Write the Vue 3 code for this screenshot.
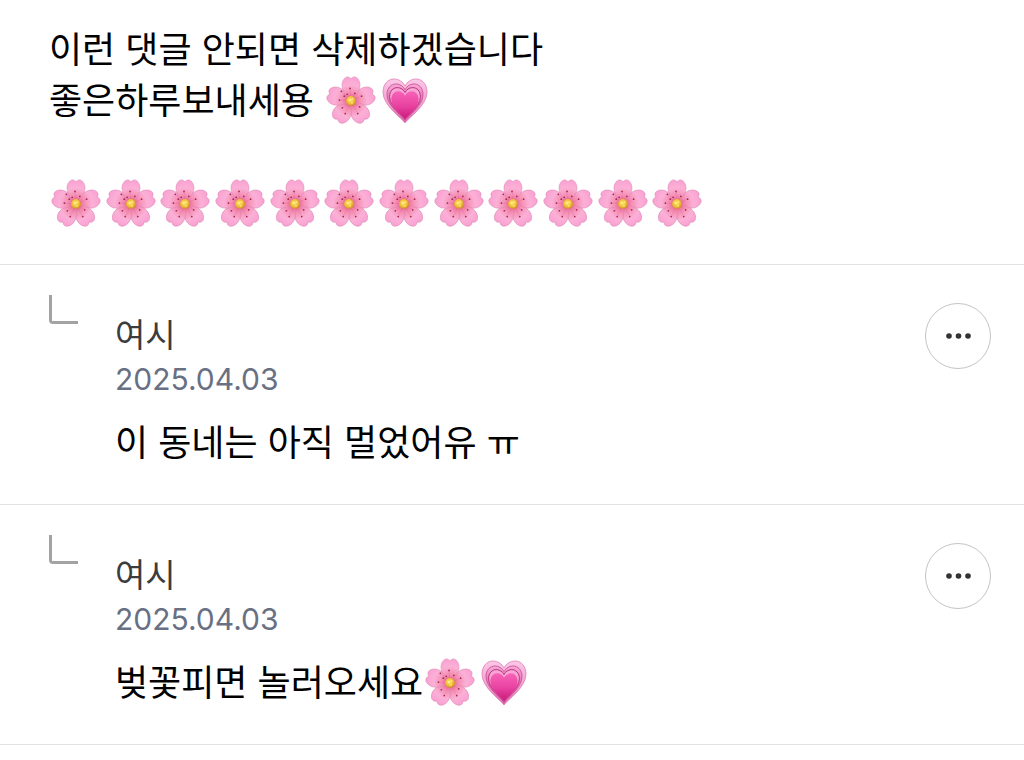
<template>
  <main class="comments">
    <!-- emoji -->
    <svg class="sprite" aria-hidden="true">
      <defs>
        <radialGradient id="petal-fill" gradientUnits="userSpaceOnUse" cx="0" cy="0" r="26">
          <stop offset="0" stop-color="#e2507c" />
          <stop offset="0.35" stop-color="#f58fb4" />
          <stop offset="0.65" stop-color="#fbb0d6" />
          <stop offset="1" stop-color="#fa9fd3" />
        </radialGradient>
        <radialGradient id="core-fill" cx="0.45" cy="0.4" r="0.6">
          <stop offset="0" stop-color="#ffe873" />
          <stop offset="0.6" stop-color="#f0bd38" />
          <stop offset="1" stop-color="#c98a2c" />
        </radialGradient>
        <linearGradient id="heart-fill" x1="0" y1="0" x2="0" y2="1">
          <stop offset="0" stop-color="#f862b8" />
          <stop offset="0.55" stop-color="#e8419f" />
          <stop offset="1" stop-color="#c91a7b" />
        </linearGradient>
        <linearGradient id="heart-mid" x1="0" y1="0" x2="0" y2="1">
          <stop offset="0" stop-color="#f8a8d6" />
          <stop offset="1" stop-color="#d83391" />
        </linearGradient>
        <linearGradient id="heart-outer" x1="0" y1="0" x2="0" y2="1">
          <stop offset="0" stop-color="#fbc8e6" />
          <stop offset="0.6" stop-color="#f29dcd" />
          <stop offset="1" stop-color="#df5ba6" />
        </linearGradient>
        <path id="petal" d="M0 0C-4-4-9.300-10-9.300-16.500C-9.300-21-6.500-25-3.500-25Q-1.500-25 0-23Q1.500-25 3.500-25C6.500-25 9.300-21 9.300-16.500C9.300-10 4-4 0 0Z" />
        <path id="heart-shape" d="M0 22C-3 17-22 5-22-9C-22-17-17-22-11-22C-6-22-2-19 0-15C2-19 6-22 11-22C17-22 22-17 22-9C22 5 3 17 0 22Z" />
      </defs>
      <symbol id="blossom" viewBox="-28 -28 56 56">
        <use v-for="n in 5" :key="n" href="#petal" fill="url(#petal-fill)" stroke="#dd84b0"
             stroke-width="0.6" :transform="`rotate(${n * 72})`" />
        <g stroke="#d95588" stroke-width="0.6">
          <line v-for="(s, i) in stamens" :key="i" x1="0" y1="0" :x2="s[0]" :y2="s[1]" opacity="0.35" />
        </g>
        <circle v-for="(s, i) in stamens" :key="i" :cx="s[0]" :cy="s[1]" r="0.9" fill="#a32650" />
        <circle r="5.200" fill="url(#core-fill)" />
        <circle cx="-1.500" cy="-1" r="1" fill="#fff0a0" />
        <circle cx="1.500" cy="-2" r="0.8" fill="#fff0a0" />
        <circle cx="1" cy="2" r="0.9" fill="#ffe36d" />
      </symbol>
      <symbol id="heart" viewBox="-27 -27 54 54">
        <use href="#heart-shape" fill="url(#heart-outer)" stroke="#e07fb8" stroke-width="0.8" />
        <use href="#heart-shape" fill="url(#heart-mid)" stroke="#c24d92" stroke-width="1" transform="translate(0 1) scale(0.82)" />
        <use href="#heart-shape" fill="#f7a6d4" stroke="#b5307c" stroke-width="1.4" transform="translate(0 2) scale(0.7)" />
        <use href="#heart-shape" fill="url(#heart-fill)" transform="translate(0 4) scale(0.62)" />
      </symbol>
    </svg>

    <article class="comment">
      <p class="text">이런 댓글 안되면 삭제하겠습니다</p>
      <p class="text">
        좋은하루보내세용&nbsp;<svg class="emoji" role="img" aria-label="벚꽃"><use href="#blossom" /></svg><svg class="emoji" role="img" aria-label="하트"><use href="#heart" /></svg>
      </p>
      <div class="blossoms">
        <svg v-for="n in 12" :key="n" class="emoji" role="img" aria-label="벚꽃"><use href="#blossom" /></svg>
      </div>
    </article>

    <article v-for="reply in replies" :key="reply.id" class="reply">
      <span class="branch"></span>
      <div class="body">
        <h2 class="name">{{ reply.name }}</h2>
        <time class="date">{{ reply.date }}</time>
        <p class="text">
          {{ reply.text }}<svg v-for="e in reply.emoji" :key="e" class="emoji" role="img" :aria-label="e"><use :href="'#' + e" /></svg>
        </p>
      </div>
      <button type="button" class="more" aria-label="더보기">
        <svg viewBox="0 0 25 6" width="25" height="6">
          <circle cx="3" cy="3" r="2.800" />
          <circle cx="12.500" cy="3" r="2.800" />
          <circle cx="22" cy="3" r="2.800" />
        </svg>
      </button>
    </article>
  </main>
</template>

<script setup>
const replies = [
  { id: 1, name: '여시', date: '2025.04.03', text: '이 동네는 아직 멀었어유 ㅠ', emoji: [] },
  { id: 2, name: '여시', date: '2025.04.03', text: '벚꽃피면 놀러오세요', emoji: ['blossom', 'heart'] }
]

// stamen tips, measured from the flower's centre
const stamens = [
  [-1, -13], [-10, -10], [-12, -1], [-9, 7], [-6, 13],
  [7, 13], [9, 6], [11, -5], [4, -8], [-4, -7], [-7, -5]
]
</script>

<style>
body {
  margin: 0;
  background: #fff;
}
</style>

<style scoped>
.comments {
  font-family: Inter, "Noto Sans CJK KR", sans-serif;
  color: #000;
}

.sprite {
  position: absolute;
  width: 0;
  height: 0;
}

.comment {
  padding: 25px 49px 36px;
  border-bottom: 1px solid #e2e2e2;
}

.text {
  margin: 0;
  font-size: 36px;
  line-height: 51px;
}

.emoji {
  display: inline-block;
  width: 54px;
  height: 54px;
  margin: -9px 0 -3px;
  vertical-align: middle;
}

.blossoms {
  display: grid;
  grid-template-columns: repeat(12, 1fr);
  max-width: 656px;
  padding-top: 59px;
}

.reply {
  display: flex;
  align-items: flex-start;
  padding: 30px 33px 35px 49px;
  border-bottom: 1px solid #e2e2e2;
}

.branch {
  box-sizing: border-box;
  width: 29px;
  height: 29px;
  border-left: 3px solid #a3a3a3;
  border-bottom: 3px solid #a3a3a3;
  border-bottom-left-radius: 4px;
}

.body {
  flex: 1;
  padding: 20px 0 0 37px;
}

.name {
  margin: 0;
  font-size: 33px;
  font-weight: 400;
  line-height: 40px;
  color: #3c3c3c;
}

.date {
  display: block;
  margin: 4px 0 19px;
  font-size: 30px;
  line-height: 40px;
  color: #697083;
}

.more {
  display: flex;
  align-items: center;
  justify-content: center;
  width: 66px;
  height: 66px;
  margin-top: 8px;
  padding: 0;
  border: 1px solid #c4c4c4;
  border-radius: 50%;
  background: #fff;
  fill: #333;
  cursor: pointer;
}
</style>
